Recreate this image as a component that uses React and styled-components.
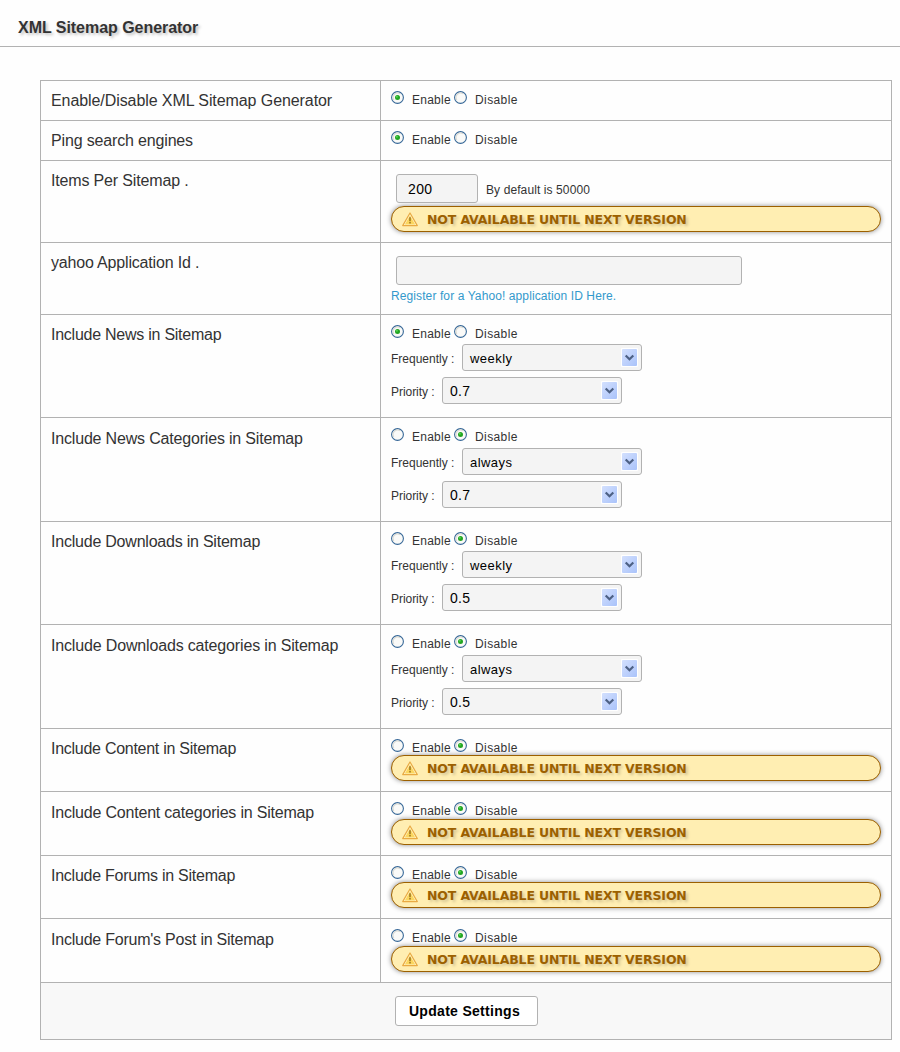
import React from 'react';
import styled, { createGlobalStyle } from 'styled-components';

const GlobalStyle = createGlobalStyle`
  * { box-sizing: border-box; }
  body {
    margin: 0;
    background: #fefefe;
    color: #333;
    font-family: "Liberation Sans", Arial, sans-serif;
    font-size: 12px;
  }
`;

const Page = styled.main`
  width: 900px;
  height: 1052px;
  overflow: hidden;
`;

const Header = styled.header`
  height: 47px;
  padding: 18px 0 0 18px;
  border-bottom: 1px solid #b2b2b2;
`;

const Title = styled.h1`
  margin: 0;
  font-size: 16px;
  line-height: 20px;
  font-weight: bold;
  letter-spacing: -0.04px;
  text-shadow: 2px 2px 3px rgba(0, 0, 0, 0.25);
`;

const Form = styled.form`
  width: 852px;
  margin: 33px 0 0 40px;
  border: 1px solid #b2b2b2;
  border-top: 0;
`;

const Row = styled.div`
  display: grid;
  grid-template-columns: 339px 1fr;
  height: ${(p) => p.$height}px;
  border-top: 1px solid #b2b2b2;
`;

const Label = styled.div`
  padding: ${(p) => 11 + (p.$shift || 0)}px 0 0 10px;
  font-size: 16px;
  line-height: 18px;
  letter-spacing: ${(p) => p.$spacing || 0}px;
  white-space: pre;
`;

const Field = styled.div`
  padding: 10px 9px 0 10px;
  border-left: 1px solid #b2b2b2;
`;

const RadioLine = styled.div`
  display: flex;
  height: ${(p) => 15 + (p.$shift || 0)}px;
`;

const Option = styled.label`
  display: flex;
  width: 63px;
`;

const OptionText = styled.span`
  padding: 2px 0 0 8px;
  line-height: 14px;
  letter-spacing: ${(p) => p.$spacing}px;
`;

const Dial = styled.svg`
  flex: none;
  display: block;
  width: 13px;
  height: 13px;
`;

const Notice = styled.div`
  display: flex;
  align-items: center;
  width: 490px;
  height: 26px;
  margin-top: ${(p) => p.$gap}px;
  padding: 1px 0 0 10px;
  border: 1px solid #9c6000;
  border-radius: 13px;
  background: #ffeeb2;
  box-shadow: 0 0 5px rgba(0, 0, 0, 0.45);
  color: #9c6000;
  font: bold 12.5px/16px "DejaVu Sans", Verdana, sans-serif;
  letter-spacing: -0.14px;
  white-space: nowrap;
  text-shadow: 2px 2px 3px rgba(0, 0, 0, 0.18);
`;

const NoticeText = styled.span`
  padding-top: 1px;
`;

const NoticeIcon = styled.svg`
  width: 16px;
  height: 15px;
  margin-right: 9px;
`;

const InputLine = styled.div`
  display: flex;
  align-items: center;
  padding: 3px 0 0 5px;
`;

const TextInput = styled.input`
  width: ${(p) => p.$width}px;
  height: 29px;
  margin: 0 8px 0 0;
  padding: 0 11px;
  border: 1px solid #b2b2b2;
  border-radius: 3px;
  background: #f4f4f4;
  color: #000;
  font: 14px "Liberation Sans", Arial, sans-serif;
  letter-spacing: 0.4px;
  outline: none;
`;

const Hint = styled.span`
  padding-top: 3px;
  line-height: 14px;
  letter-spacing: 0.1px;
`;

const Link = styled.a`
  display: block;
  padding-top: 4px;
  line-height: 14px;
  letter-spacing: 0.1px;
  color: #3399cc;
`;

const SelectLine = styled.div`
  display: flex;
  height: 27px;
  margin-top: ${(p) => p.$gap}px;
`;

const SelectLabel = styled.span`
  width: ${(p) => p.$width}px;
  padding-top: 8px;
  line-height: 14px;
  letter-spacing: ${(p) => p.$spacing}px;
  white-space: nowrap;
`;

const SelectBox = styled.div`
  display: flex;
  align-items: center;
  justify-content: space-between;
  width: 180px;
  padding: 0 3px 0 7px;
  border: 1px solid #b2b2b2;
  border-radius: 3px;
  background: #f4f4f4;
  color: #000;
`;

const SelectValue = styled.span`
  padding-top: ${(p) => (p.$size < 14 ? 3 : 1)}px;
  font-size: ${(p) => p.$size}px;
  line-height: 16px;
  letter-spacing: ${(p) => p.$spacing}px;
`;

const Arrow = styled.svg`
  display: block;
  width: 17px;
  height: 19px;
`;

const Footer = styled.div`
  height: 57px;
  padding: 13px 0 0 354px;
  border-top: 1px solid #b2b2b2;
  background: #f8f8f8;
`;

const SubmitButton = styled.button`
  display: block;
  width: 143px;
  height: 30px;
  padding: 0 4px 0 0;
  border: 1px solid #b2b2b2;
  border-radius: 3px;
  background: #fff;
  color: #000;
  font: bold 14px "Liberation Sans", Arial, sans-serif;
  letter-spacing: 0.3px;
`;

function Radio({ checked }) {
  return (
    <Dial viewBox="0 0 13 13">
      <circle cx="6.5" cy="6.5" r="5.9" fill="#fafaf8" stroke="#366797" strokeWidth="1.1" />
      <path d="M2.8 9A4.5 4.5 0 0 1 9 2.8" fill="none" stroke="#dcdcd5" strokeWidth="1.2" />
      {checked && <circle cx="6.5" cy="6.5" r="2.5" fill="#22a522" />}
      {checked && <circle cx="5.9" cy="5.7" r="1" fill="#55d551" />}
    </Dial>
  );
}

function Toggle({ on, shift }) {
  return (
    <RadioLine $shift={shift}>
      <Option>
        <Radio checked={on} />
        <OptionText $spacing={0.25}>Enable</OptionText>
      </Option>
      <Option>
        <Radio checked={!on} />
        <OptionText $spacing={0.4}>Disable</OptionText>
      </Option>
    </RadioLine>
  );
}

function Unavailable({ gap }) {
  return (
    <Notice $gap={gap}>
      <NoticeIcon viewBox="0 0 16 15">
        <path d="M8 1L15.3 13.6H.7Z" fill="#fff6cf" stroke="#e9aa42" strokeWidth="1.2" strokeLinejoin="round" />
        <path d="M8 3.4L13.2 12.4H2.8Z" fill="#fbd65e" />
        <path d="M7.1 5.2h1.8v4H7.1zM7.1 10h1.8v1.6H7.1z" fill="#a8842b" />
      </NoticeIcon>
      <NoticeText>NOT AVAILABLE UNTIL NEXT VERSION</NoticeText>
    </Notice>
  );
}

function Select({ label, labelWidth, spacing, value, size, valueSpacing, gap }) {
  return (
    <SelectLine $gap={gap}>
      <SelectLabel $width={labelWidth} $spacing={spacing}>{label}</SelectLabel>
      <SelectBox>
        <SelectValue $size={size} $spacing={valueSpacing}>{value}</SelectValue>
        <Arrow viewBox="0 0 17 19">
          <defs>
            <linearGradient id="face" x1="0" y1="0" x2="1" y2="1">
              <stop offset="0" stopColor="#d3e0fe" />
              <stop offset="1" stopColor="#aac3fa" />
            </linearGradient>
          </defs>
          <rect width="17" height="19" rx="1" fill="#fff" />
          <rect x="1" y="1" width="15" height="17" rx="1" fill="url(#face)" />
          <path d="M4.7 7.5L8.5 11.2L12.3 7.5" fill="none" stroke="#4d6185" strokeWidth="2.2" />
        </Arrow>
      </SelectBox>
    </SelectLine>
  );
}

const schedules = [
  { label: 'Include News in Sitemap', spacing: -0.25, height: 103, on: true, shift: 0, freq: 'weekly', priority: '0.7' },
  { label: 'Include News Categories in Sitemap', spacing: -0.18, height: 104, on: false, shift: 1, freq: 'always', priority: '0.7' },
  { label: 'Include Downloads in Sitemap', spacing: -0.22, height: 103, on: false, shift: 0, freq: 'weekly', priority: '0.5' },
  { label: 'Include Downloads categories in Sitemap', spacing: -0.16, height: 104, on: false, shift: 1, freq: 'always', priority: '0.5' },
];

const pending = [
  { label: 'Include Content in Sitemap', spacing: -0.27, height: 63, shift: 0 },
  { label: 'Include Content categories in Sitemap', spacing: -0.2, height: 64, shift: 1 },
  { label: 'Include Forums in Sitemap', spacing: -0.25, height: 63, shift: 0 },
  { label: "Include Forum's Post in Sitemap", spacing: -0.23, height: 64, shift: 1 },
];

export default function App() {
  return (
    <Page>
      <GlobalStyle />
      <Header>
        <Title>XML Sitemap Generator</Title>
      </Header>
      <Form>
        <Row $height={40}>
          <Label $spacing={-0.08}>Enable/Disable XML Sitemap Generator</Label>
          <Field><Toggle on /></Field>
        </Row>
        <Row $height={40}>
          <Label $spacing={-0.16}>Ping search engines</Label>
          <Field><Toggle on /></Field>
        </Row>
        <Row $height={82}>
          <Label $spacing={-0.16}>Items Per Sitemap .</Label>
          <Field>
            <InputLine>
              <TextInput $width={82} defaultValue="200" />
              <Hint>By default is 50000</Hint>
            </InputLine>
            <Unavailable gap={3} />
          </Field>
        </Row>
        <Row $height={72}>
          <Label $spacing={-0.18}>yahoo Application Id .</Label>
          <Field>
            <InputLine>
              <TextInput $width={346} />
            </InputLine>
            <Link>Register for a Yahoo! application ID Here.</Link>
          </Field>
        </Row>
        {schedules.map((row) => (
          <Row key={row.label} $height={row.height}>
            <Label $shift={row.shift} $spacing={row.spacing}>{row.label}</Label>
            <Field>
              <Toggle on={row.on} shift={row.shift} />
              <Select label="Frequently :" labelWidth={71} spacing={0} value={row.freq} size={13} valueSpacing={0.45} gap={4} />
              <Select label="Priority :" labelWidth={51} spacing={-0.05} value={row.priority} size={14} valueSpacing={0.3} gap={6} />
            </Field>
          </Row>
        ))}
        {pending.map((row) => (
          <Row key={row.label} $height={row.height}>
            <Label $shift={row.shift} $spacing={row.spacing}>{row.label}</Label>
            <Field>
              <Toggle on={false} shift={row.shift} />
              <Unavailable gap={1} />
            </Field>
          </Row>
        ))}
        <Footer>
          <SubmitButton type="button">Update Settings</SubmitButton>
        </Footer>
      </Form>
    </Page>
  );
}
